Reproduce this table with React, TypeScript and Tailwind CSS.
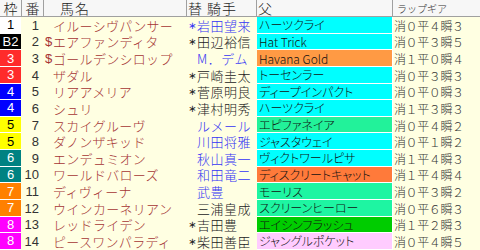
import React from "react";

type Row = {
  waku: string;
  wakuBg: string;
  wakuFg: string;
  ban: number;
  mark: string;
  name: string;
  jMark: string;
  jockey: string;
  jBlue: boolean;
  sire: string;
  sireBg: string;
  gear: string;
};

const rows: Row[] = [
  { waku: "1", wakuBg: "bg-white", wakuFg: "text-black", ban: 1, mark: "", name: "イルーシヴパンサー", jMark: "*", jockey: "岩田望来", jBlue: true, sire: "ハーツクライ", sireBg: "bg-[#00ffff]", gear: "消０平４瞬３" },
  { waku: "B2", wakuBg: "bg-black", wakuFg: "text-white", ban: 2, mark: "$", name: "エアファンディタ", jMark: "*", jockey: "田辺裕信", jBlue: false, sire: "Hat Trick", sireBg: "bg-[#00ffff]", gear: "消０平３瞬５" },
  { waku: "3", wakuBg: "bg-[#ff2b2b]", wakuFg: "text-white", ban: 3, mark: "$", name: "ゴールデンシロップ", jMark: "", jockey: "M．デム", jBlue: true, sire: "Havana Gold", sireBg: "bg-[#ff9a44]", gear: "消１平０瞬４" },
  { waku: "3", wakuBg: "bg-[#ff2b2b]", wakuFg: "text-white", ban: 4, mark: "", name: "ザダル", jMark: "*", jockey: "戸崎圭太", jBlue: false, sire: "トーセンラー", sireBg: "bg-[#00ffff]", gear: "消０平３瞬３" },
  { waku: "4", wakuBg: "bg-[#0000ff]", wakuFg: "text-white", ban: 5, mark: "", name: "リアアメリア", jMark: "*", jockey: "菅原明良", jBlue: false, sire: "ディープインパクト", sireBg: "bg-[#00ffff]", gear: "消０平０瞬３" },
  { waku: "4", wakuBg: "bg-[#0000ff]", wakuFg: "text-white", ban: 6, mark: "", name: "シュリ", jMark: "*", jockey: "津村明秀", jBlue: false, sire: "ハーツクライ", sireBg: "bg-[#00ffff]", gear: "消１平３瞬３" },
  { waku: "5", wakuBg: "bg-[#ffff00]", wakuFg: "text-black", ban: 7, mark: "", name: "スカイグルーヴ", jMark: "", jockey: "ルメール", jBlue: true, sire: "エピファネイア", sireBg: "bg-[#22f29a]", gear: "消０平４瞬２" },
  { waku: "5", wakuBg: "bg-[#ffff00]", wakuFg: "text-black", ban: 8, mark: "", name: "ダノンザキッド", jMark: "", jockey: "川田将雅", jBlue: true, sire: "ジャスタウェイ", sireBg: "bg-[#00ffff]", gear: "消０平１瞬２" },
  { waku: "6", wakuBg: "bg-[#008282]", wakuFg: "text-white", ban: 9, mark: "", name: "エンデュミオン", jMark: "", jockey: "秋山真一", jBlue: true, sire: "ヴィクトワールピサ", sireBg: "bg-[#00ffff]", gear: "消１平４瞬３" },
  { waku: "6", wakuBg: "bg-[#008282]", wakuFg: "text-white", ban: 10, mark: "", name: "ワールドバローズ", jMark: "", jockey: "和田竜二", jBlue: true, sire: "ディスクリートキャット", sireBg: "bg-[#ff7a3a]", gear: "消１平４瞬４" },
  { waku: "7", wakuBg: "bg-[#ff8000]", wakuFg: "text-white", ban: 11, mark: "", name: "ディヴィーナ", jMark: "", jockey: "武豊", jBlue: true, sire: "モーリス", sireBg: "bg-[#1ef5a2]", gear: "消０平３瞬２" },
  { waku: "7", wakuBg: "bg-[#ff8000]", wakuFg: "text-white", ban: 12, mark: "", name: "ウインカーネリアン", jMark: "", jockey: "三浦皇成", jBlue: false, sire: "スクリーンヒーロー", sireBg: "bg-[#1ef5a2]", gear: "消０平６瞬３" },
  { waku: "8", wakuBg: "bg-[#ff00ff]", wakuFg: "text-white", ban: 13, mark: "", name: "レッドライデン", jMark: "*", jockey: "吉田豊", jBlue: false, sire: "エイシンフラッシュ", sireBg: "bg-[#00cc00]", gear: "消１平２瞬３" },
  { waku: "8", wakuBg: "bg-[#ff00ff]", wakuFg: "text-white", ban: 14, mark: "", name: "ピースワンパラディ", jMark: "*", jockey: "柴田善臣", jBlue: false, sire: "ジャングルポケット", sireBg: "bg-[#ffccff]", gear: "消０平４瞬５" },
];

const font = "font-['Noto_Sans_CJK_JP','Liberation_Sans',sans-serif]";

export default function App() {
  return (
    <div className={`w-[480px] h-[250px] overflow-hidden bg-[#ffffe2] ${font} font-light`}>
      {/* header */}
      <div className="flex h-[17px] bg-[#f7f7f7] border-b border-[#a0a0a0] text-[14px] leading-[15px] text-[#222]">
        <div className="w-[22px] shrink-0 border-r border-[#a0a0a0] flex items-center justify-center">枠</div>
        <div className="w-[22px] shrink-0 border-r border-[#a0a0a0] flex items-center justify-center">番</div>
        <div className="w-[143px] shrink-0 border-r border-[#a0a0a0] flex items-center pl-[16px] tracking-[1px]">馬名</div>
        <div className="w-[70px] shrink-0 border-r border-[#a0a0a0] flex items-center pl-[1px] tracking-[1px]">替 騎手</div>
        <div className="w-[136px] shrink-0 border-r border-[#a0a0a0] flex items-center pl-[1px]">父</div>
        <div className="flex-1 flex items-center pl-[4px] text-[10px] text-[#333]">ラップギア</div>
      </div>

      {rows.map((r) => (
        <div key={r.ban} className="flex h-[16.64px] leading-[15px]">
          <div className="w-[22px] shrink-0 flex">
            <div className={`w-[21px] h-full border-b border-white flex items-center justify-center text-[13px] font-normal font-['Liberation_Sans',sans-serif] ${r.wakuBg} ${r.wakuFg}`}>
              {r.waku}
            </div>
          </div>
          <div className="w-[22px] shrink-0 flex items-center justify-end pr-[5px] text-[13px] font-normal text-[#333] font-['Liberation_Sans',sans-serif]">
            {r.ban}
          </div>
          <div className="w-[143px] shrink-0 flex items-center pl-[1px] text-[13px] text-[#a53434] whitespace-nowrap tracking-[0.3px]">
            <span className="w-[8px] shrink-0 font-normal font-['Liberation_Sans',sans-serif]">{r.mark}</span>
            <span>{r.name}</span>
          </div>
          <div className={`w-[70px] shrink-0 flex items-center pl-[1px] text-[13px] whitespace-nowrap tracking-[0.5px] ${r.jBlue ? "text-[#3434f4]" : "text-[#222]"}`}>
            <span className="w-[9px] shrink-0 text-[10px] tracking-normal font-normal font-['DejaVu_Sans',sans-serif]">{r.jMark ? "∗" : ""}</span>
            <span>{r.jockey}</span>
          </div>
          <div className="w-[136px] shrink-0 flex border-r border-white">
            <div className={`flex-1 h-full border-b border-white flex items-center pl-[2px] text-[12px] text-[#111] whitespace-nowrap overflow-hidden [font-feature-settings:'palt'] ${r.sireBg}`}>
              {r.sire}
            </div>
          </div>
          <div className="flex-1 flex items-center pl-[1px] text-[12px] text-[#333] whitespace-nowrap tracking-[-0.4px]">
            {r.gear}
          </div>
        </div>
      ))}
    </div>
  );
}
